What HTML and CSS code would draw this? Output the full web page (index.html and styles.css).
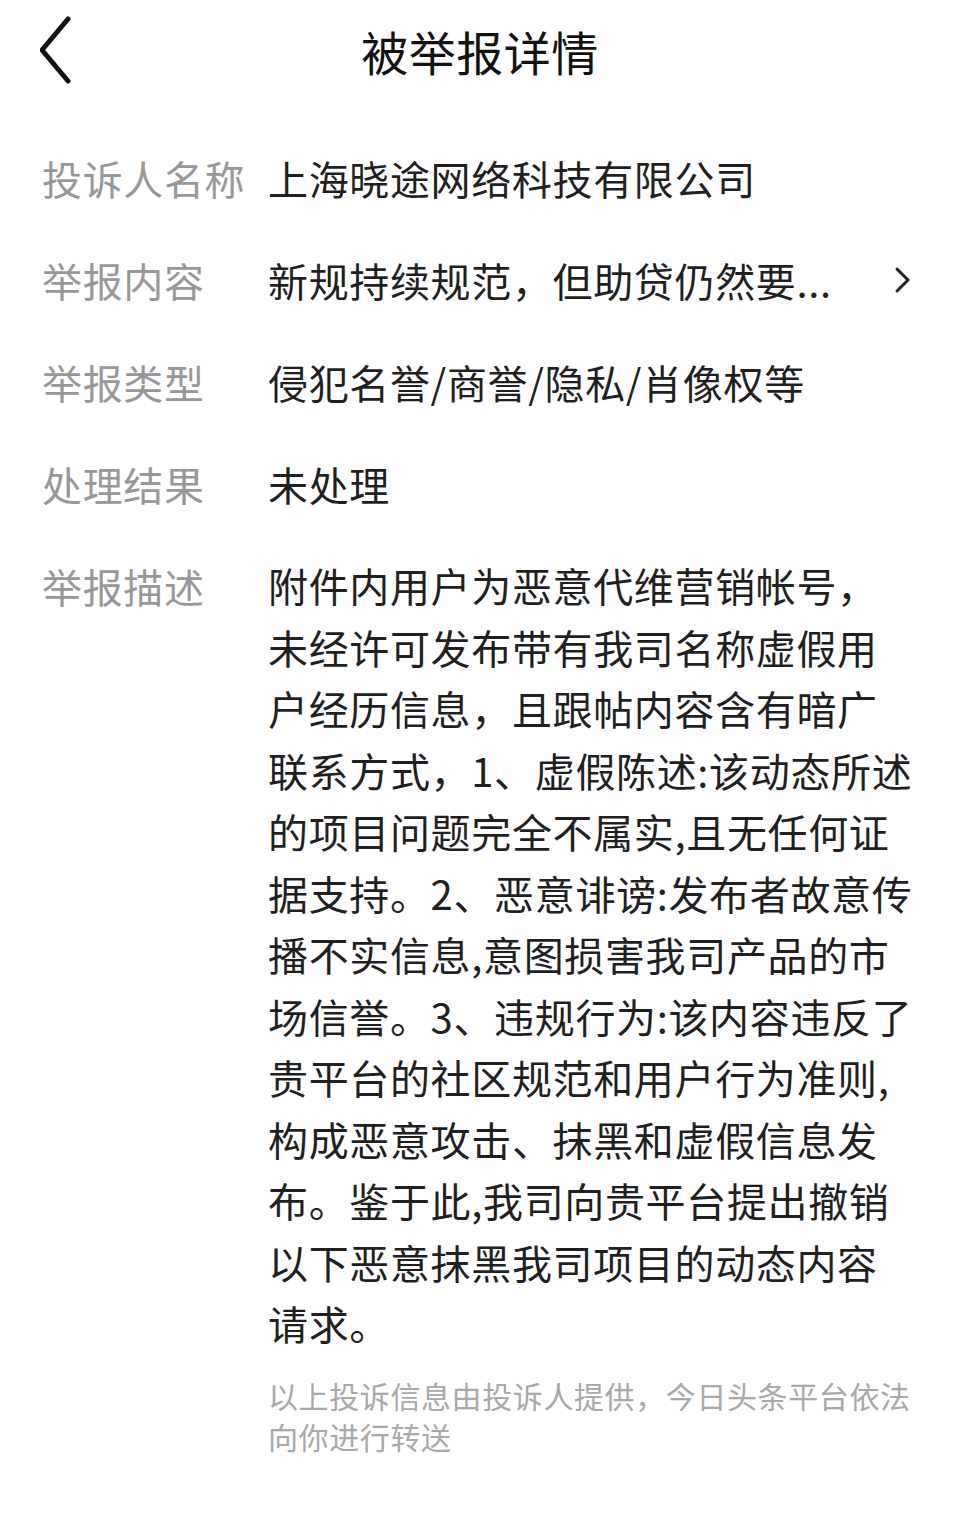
FILE: index.html
```html
<!DOCTYPE html>
<html lang="zh-CN">
<head>
<meta charset="utf-8">
<title>被举报详情</title>
<link rel="stylesheet" href="styles.css">
</head>
<body>
<div class="page">
  <header class="topbar">
    <svg class="back" width="40" height="70" viewBox="0 0 40 70" aria-hidden="true">
      <polyline points="28,3 2,34 28,65" fill="none" stroke="#111" stroke-width="5" stroke-linecap="round" stroke-linejoin="round"/>
    </svg>
    <h1 class="title">被举报详情</h1>
  </header>
  <main class="details">
    <div class="row">
      <div class="label">投诉人名称</div>
      <div class="value">上海晓途网络科技有限公司</div>
    </div>
    <div class="row">
      <div class="label">举报内容</div>
      <div class="value value-link">
        <span>新规持续规范，但助贷仍然要...</span>
        <svg class="chev" width="20" height="30" viewBox="0 0 20 30" aria-hidden="true">
          <polyline points="4,4 15,15 4,26" fill="none" stroke="#222" stroke-width="3" stroke-linecap="round" stroke-linejoin="round"/>
        </svg>
      </div>
    </div>
    <div class="row">
      <div class="label">举报类型</div>
      <div class="value">侵犯名誉/商誉/隐私/肖像权等</div>
    </div>
    <div class="row">
      <div class="label">处理结果</div>
      <div class="value">未处理</div>
    </div>
    <div class="row">
      <div class="label">举报描述</div>
      <div class="value desc">
        <span class="ln">附件内用户为恶意代维营销帐号，</span>
        <span class="ln">未经许可发布带有我司名称虚假用</span>
        <span class="ln">户经历信息，且跟帖内容含有暗广</span>
        <span class="ln">联系方式，1、虚假陈述:该动态所述</span>
        <span class="ln">的项目问题完全不属实,且无任何证</span>
        <span class="ln">据支持。2、恶意诽谤:发布者故意传</span>
        <span class="ln">播不实信息,意图损害我司产品的市</span>
        <span class="ln">场信誉。3、违规行为:该内容违反了</span>
        <span class="ln">贵平台的社区规范和用户行为准则,</span>
        <span class="ln">构成恶意攻击、抹黑和虚假信息发</span>
        <span class="ln">布。鉴于此,我司向贵平台提出撤销</span>
        <span class="ln">以下恶意抹黑我司项目的动态内容</span>
        <span class="ln">请求。</span>
      </div>
    </div>
    <p class="note">以上投诉信息由投诉人提供，今日头条平台依法<br>向你进行转送</p>
  </main>
</div>
</body>
</html>
```

FILE: styles.css
```css
html, body {
  margin: 0;
  padding: 0;
  background: #fff;
}
body {
  font-family: "Noto Sans CJK SC", "Noto Sans", sans-serif;
  color: #222;
}
.page {
  width: 960px;
}
.topbar {
  position: relative;
  height: 100px;
  display: flex;
  align-items: center;
  justify-content: center;
}
.back {
  position: absolute;
  left: 40px;
  top: 16px;
}
.title {
  margin: 0;
  font-size: 47px;
  font-weight: 400;
  letter-spacing: 0.5px;
  color: #111;
  line-height: 1;
}
.details {
  padding: 27px 47px 0 42px;
}
.row {
  display: grid;
  grid-template-columns: 226px 1fr;
  padding: 20px 0;
  font-size: 40px;
  line-height: 62px;
  letter-spacing: 0.65px;
}
.label {
  color: #979797;
  white-space: nowrap;
}
.value {
  color: #1f1f1f;
  white-space: nowrap;
}
.value-link {
  display: flex;
  justify-content: space-between;
  align-items: center;
}
.desc {
  display: flex;
  flex-direction: column;
  line-height: 61.5px;
}
.ln {
  display: block;
  white-space: nowrap;
}
.note {
  margin: 0 0 0 226px;
  font-size: 30px;
  line-height: 41px;
  letter-spacing: 0.6px;
  color: #a8a8a8;
}
```
